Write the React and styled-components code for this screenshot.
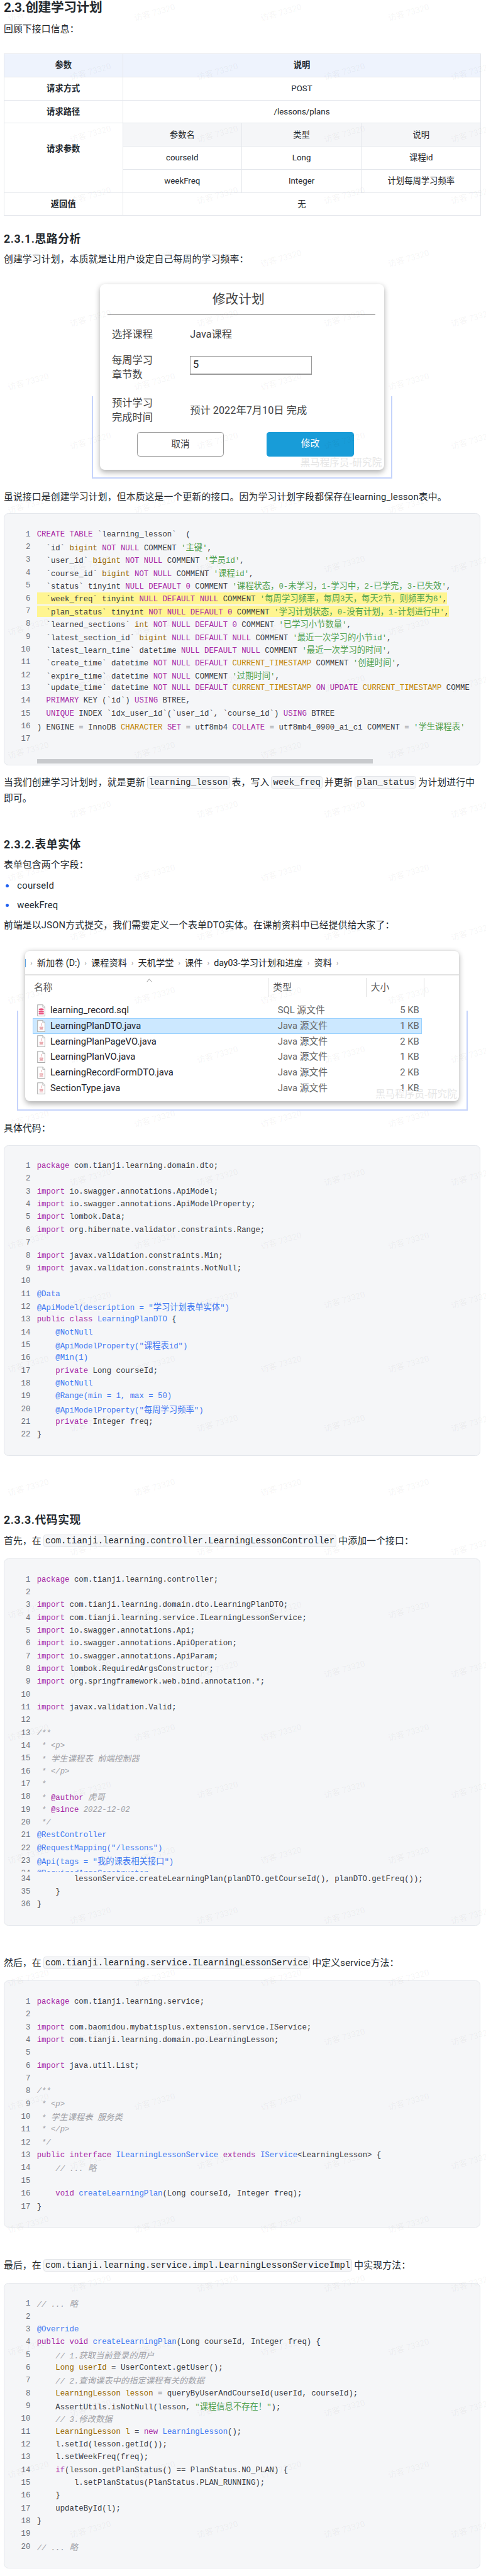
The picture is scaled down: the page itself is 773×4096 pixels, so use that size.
import React from 'react';
import styled, { createGlobalStyle } from 'styled-components';

const GlobalStyle = createGlobalStyle`
  html, body { margin: 0; padding: 0; background: #fff; }
  * { box-sizing: border-box; }
`;

const SANS = `Roboto, "Noto Sans CJK SC", sans-serif`;
const MONO = `"Liberation Mono", "Noto Sans CJK SC", monospace`;

// sizes are read off the 1044px wide reference, drawn at 0.74
const px = n => `${n * 0.74}px`;

const Page = styled.div`
  position: relative;
  width: ${px(1044)};
  padding: 0 ${px(11)} ${px(13)} ${px(8)};
  overflow: hidden;
  font-family: ${SANS};
  font-size: ${px(20)};
  line-height: ${px(34)};
  letter-spacing: ${px(0.25)};
  color: #24292e;
`;

const H2 = styled.h2`
  margin: 0;
  font-size: ${px(28)};
  font-weight: 700;
  line-height: ${px(34)};
  letter-spacing: ${px(-0.5)};
`;

const H3 = styled.h3`
  margin: ${p => px(p.$top)} 0 0;
  font-size: ${px(24)};
  font-weight: 700;
  line-height: ${px(34)};
  letter-spacing: ${px(0.8)};
`;

const P = styled.p`
  margin: ${p => px(p.$top)} 0 0;
`;

const Inline = styled.code`
  display: inline-block;
  height: ${px(27)};
  margin: 0 ${px(4)};
  padding: 0 ${px(3)};
  border: 1px solid #e3e5e9;
  border-radius: ${px(5)};
  background: #f5f6f8;
  font-family: ${MONO};
  font-size: ${px(18.85)};
  line-height: ${px(25)};
  letter-spacing: 0;
  vertical-align: 1px;
  color: #24292e;
`;

const List = styled.ul`
  margin: ${px(10)} 0 0;
  padding: 0;
  list-style: none;
`;

const Item = styled.li`
  display: flex;
  align-items: center;
  & + & { margin-top: ${px(8)}; }
  &::before {
    content: '';
    width: ${px(7)};
    height: ${px(7)};
    margin: 0 ${px(18)} 0 ${px(4)};
    border-radius: 50%;
    background: #1f5ff0;
  }
`;

/* params table */
const Table = styled.table`
  width: ${px(1025)};
  margin-top: ${px(35)};
  border-collapse: collapse;
  table-layout: fixed;
  font-size: ${px(18)};
  letter-spacing: 0;
  text-align: center;
  th, td { border: 1px solid #e4e7ec; padding: 0; height: ${px(49.7)}; }
  th { font-weight: 700; }
`;

const HeadRow = styled.tr`
  th { background: #eef3fd; }
`;

const SubHead = styled.td`
  background: #f5f6f8;
`;

const TopCell = styled.th`
  vertical-align: top;
  padding-top: ${px(38)} !important;
`;

/* screenshots */
const Figure = styled.figure`
  position: relative;
  width: ${p => px(p.$width)};
  margin: ${p => px(p.$top)} auto 0;
  padding: ${px(20)} ${p => px(p.$side)};
  letter-spacing: 0;
  &::before {
    content: '';
    position: absolute;
    left: 0;
    right: 0;
    bottom: 0;
    height: ${p => px(p.$frame)};
    border: 2px solid #c5d3fb;
    border-top: 0;
  }
`;

const ShotCard = styled.div`
  position: relative;
  background: #fff;
  border-radius: ${px(10)};
  box-shadow: 0 ${px(5)} ${px(12)} rgba(0, 0, 0, 0.32);
`;

const Stamp = styled.span`
  position: absolute;
  right: ${px(5)};
  bottom: 0;
  font-family: "Liberation Serif", "Noto Sans CJK SC", serif;
  font-size: ${px(21)};
  line-height: ${px(28)};
  color: #e6e6e6;
`;

const PlanCard = styled(ShotCard)`
  height: ${px(398)};
  padding: 0 ${px(19)} 0 ${px(15)};
  font-size: ${px(22)};
  color: #444;
`;

const PlanTitle = styled.div`
  height: ${px(66)};
  border-bottom: 2px solid #b4b4b4;
  padding-right: ${px(12)};
  text-align: center;
  font-size: ${px(28)};
  line-height: ${px(66)};
`;

const FormRow = styled.div`
  display: grid;
  grid-template-columns: ${px(168)} 1fr;
  align-items: ${p => p.$align || 'center'};
  margin-top: ${p => px(p.$top)};
  padding-left: ${px(10)};
  line-height: ${px(30)};
`;

const Field = styled.div`
  width: ${px(262)};
  height: ${px(40)};
  margin-top: ${px(5)};
  padding-left: ${px(5)};
  border: 1px solid #999;
  border-bottom-width: 2px;
  line-height: ${px(36)};
  color: #222;
`;

const PlanActions = styled.div`
  display: flex;
  margin-top: ${px(17)};
  padding-left: ${px(64)};
  gap: ${px(92)};
`;

const PlanButton = styled.div`
  width: ${px(187)};
  height: ${px(52)};
  border-radius: ${px(6)};
  border: ${p => (p.$primary ? '0' : '1px solid #999')};
  background: ${p => (p.$primary ? '#189cd8' : '#fff')};
  color: ${p => (p.$primary ? '#fff' : '#444')};
  text-align: center;
  font-size: ${px(20)};
  line-height: ${px(50)};
`;

const ExplorerCard = styled(ShotCard)`
  height: ${px(324)};
  padding-top: ${px(2)};
  border-top: 1px solid #e6e6e6;
`;

const Crumbs = styled.div`
  display: flex;
  align-items: center;
  height: ${px(50)};
  border-bottom: 2px solid #e2e2e2;
  font-size: ${px(19.2)};
  color: #222;
  white-space: nowrap;
`;

const CrumbEdge = styled.span`
  width: 1px;
  height: ${px(18)};
  background: #5aa0e0;
`;

const CrumbSep = styled.span`
  width: ${px(24)};
  text-align: center;
  font-size: ${px(15)};
  color: #999;
`;

const ExplorerHead = styled.div`
  position: relative;
  display: flex;
  height: ${px(40)};
  margin: ${px(6)} 0 0 ${px(16)};
  color: #555;
  font-size: ${px(20)};
`;

const HeadCell = styled.div`
  width: ${p => px(p.$w)};
  padding: ${px(4)} 0 0 ${p => px(p.$pad)};
  border-right: 1px solid #ddd;
`;

const SortCaret = styled.svg`
  position: absolute;
  left: ${px(245)};
  top: ${px(1)};
  width: ${px(12)};
  height: ${px(8)};
`;

const FileList = styled.div`
  margin: ${px(12)} 0 0 ${px(16)};
  width: ${px(837)};
`;

const FileRow = styled.div`
  display: grid;
  grid-template-columns: ${px(517)} 1fr auto;
  align-items: center;
  height: ${px(33.7)};
  padding: 0 ${px(6)} 0 ${px(10)};
  font-size: ${px(20)};
  color: #666;
  background: ${p => (p.$selected ? '#cce8ff' : 'transparent')};
  box-shadow: ${p => (p.$selected ? 'inset 0 0 0 1px #99d1ff' : 'none')};
`;

const FileName = styled.span`
  display: flex;
  align-items: center;
  gap: ${px(10)};
  color: #1c1c2a;
`;

const FileSvg = styled.svg`
  width: ${px(18)};
  height: ${px(26)};
  flex: none;
`;

/* code blocks */
const CodeBlock = styled.div`
  position: relative;
  margin-top: ${p => px(p.$top)};
  padding: ${px(30.5)} ${px(25)} ${p => px(p.$scroll ? 1.8 : 30.5)} 0;
  border: 1px solid #e4e7ec;
  border-radius: ${px(10)};
  background: #f5f6f8;
  font-family: ${MONO};
  font-size: ${px(16.67)};
  line-height: ${px(27.5)};
  letter-spacing: 0;
  color: #383a42;
  overflow: hidden;
`;

const CodeRow = styled.div`
  display: flex;
  height: ${px(27.5)};
  white-space: pre;
`;

const LineNo = styled.span`
  flex: none;
  width: ${px(56)};
  margin-right: ${px(14)};
  text-align: right;
  color: #6b7078;
`;

const LineText = styled.span`
  flex: 1;
  min-width: 0;
`;

const Mark = styled.span`
  display: inline-block;
  height: ${px(25)};
  line-height: ${px(25)};
  margin-top: ${px(1)};
  background: #fff591;
  vertical-align: top;
`;

const Clip = styled.div`
  height: ${px(641)};
  margin-bottom: ${px(2.25)};
  overflow: hidden;
`;

const FakeScroll = styled.div`
  width: ${px(722)};
  height: ${px(10)};
  margin: ${px(29)} 0 0 ${px(70)};
  background: #c8cacd;
`;

const Tok = styled.span`
  color: ${p => p.$color};
  font-style: ${p => (p.$italic ? 'italic' : 'normal')};
`;

const Cjk = styled.span`
  font-family: "Noto Sans CJK SC", sans-serif;
  font-size: ${px(18)};
`;

const Watermark = styled.span.attrs(p => ({ style: { left: px(p.$x), top: px(p.$y) } }))`
  position: absolute;
  transform: translate(-50%, -50%) rotate(-16deg);
  font-size: ${px(18)};
  line-height: ${px(20)};
  letter-spacing: 0;
  white-space: nowrap;
  color: rgba(0, 0, 0, 0.055);
  pointer-events: none;
`;

const COLORS = {
  k: '#a626a4',
  s: '#50a14f',
  t: '#986801',
  g: '#c18401',
  a: '#4078f2',
  c: '#a0a1a7',
};

// splits CJK runs out, they are wider than the latin cells
const withCjk = text =>
  text.split(/([\u3000-\u9fff\uff00-\uffef]+)/).map((part, i) =>
    i % 2 ? <Cjk key={i}>{part}</Cjk> : part
  );

// «k:text» marks a coloured token
const renderLine = line =>
  line.split(/(«[^»]+»)/).map((part, i) => {
    if (part[0] !== '«') return <React.Fragment key={i}>{withCjk(part)}</React.Fragment>;
    const kind = part[1];
    return (
      <Tok key={i} $color={COLORS[kind]} $italic={kind === 'c'}>
        {withCjk(part.slice(3, -1))}
      </Tok>
    );
  });

const Lines = ({ lines, start = 1, marked = [] }) =>
  lines.map((line, i) => {
    const no = start + i;
    return (
      <CodeRow key={no}>
        <LineNo>{no}</LineNo>
        <LineText>
          {marked.includes(no) ? <Mark>{renderLine(line)}</Mark> : renderLine(line)}
        </LineText>
      </CodeRow>
    );
  });

const SQL = [
  '«k:CREATE TABLE» `learning_lesson`  (',
  '  `id` «t:bigint» «k:NOT NULL» COMMENT «s:\'主键\'»,',
  '  `user_id` «t:bigint» «k:NOT NULL» COMMENT «s:\'学员id\'»,',
  '  `course_id` «t:bigint» «k:NOT NULL» COMMENT «s:\'课程id\'»,',
  '  `status` tinyint «k:NULL DEFAULT 0» COMMENT «s:\'课程状态，0-未学习，1-学习中，2-已学完，3-已失效\'»,',
  '  `week_freq` tinyint «k:NULL DEFAULT NULL» COMMENT «s:\'每周学习频率，每周3天，每天2节，则频率为6\'»,',
  '  `plan_status` tinyint «k:NOT NULL DEFAULT 0» COMMENT «s:\'学习计划状态，0-没有计划，1-计划进行中\'»,',
  '  `learned_sections` «t:int» «k:NOT NULL DEFAULT 0» COMMENT «s:\'已学习小节数量\'»,',
  '  `latest_section_id` «t:bigint» «k:NULL DEFAULT NULL» COMMENT «s:\'最近一次学习的小节id\'»,',
  '  `latest_learn_time` datetime «k:NULL DEFAULT NULL» COMMENT «s:\'最近一次学习的时间\'»,',
  '  `create_time` datetime «k:NOT NULL DEFAULT» «g:CURRENT_TIMESTAMP» COMMENT «s:\'创建时间\'»,',
  '  `expire_time` datetime «k:NOT NULL» COMMENT «s:\'过期时间\'»,',
  '  `update_time` datetime «k:NOT NULL DEFAULT» «g:CURRENT_TIMESTAMP» «k:ON UPDATE» «g:CURRENT_TIMESTAMP» COMME',
  '  «k:PRIMARY» KEY (`id`) «k:USING» BTREE,',
  '  «k:UNIQUE» INDEX `idx_user_id`(`user_id`, `course_id`) «k:USING» BTREE',
  ') ENGINE = InnoDB «g:CHARACTER» «k:SET» = utf8mb4 «k:COLLATE» = utf8mb4_0900_ai_ci COMMENT = «s:\'学生课程表\'»',
  '',
];

const DTO = [
  '«k:package» com.tianji.learning.domain.dto;',
  '',
  '«k:import» io.swagger.annotations.ApiModel;',
  '«k:import» io.swagger.annotations.ApiModelProperty;',
  '«k:import» lombok.Data;',
  '«k:import» org.hibernate.validator.constraints.Range;',
  '',
  '«k:import» javax.validation.constraints.Min;',
  '«k:import» javax.validation.constraints.NotNull;',
  '',
  '«a:@Data»',
  '«a:@ApiModel(description = "学习计划表单实体")»',
  '«k:public class» «a:LearningPlanDTO» {',
  '    «a:@NotNull»',
  '    «a:@ApiModelProperty("课程表id")»',
  '    «a:@Min(1)»',
  '    «k:private» Long courseId;',
  '    «a:@NotNull»',
  '    «a:@Range(min = 1, max = 50)»',
  '    «a:@ApiModelProperty("每周学习频率")»',
  '    «k:private» Integer freq;',
  '}',
];

const CONTROLLER = [
  '«k:package» com.tianji.learning.controller;',
  '',
  '«k:import» com.tianji.learning.domain.dto.LearningPlanDTO;',
  '«k:import» com.tianji.learning.service.ILearningLessonService;',
  '«k:import» io.swagger.annotations.Api;',
  '«k:import» io.swagger.annotations.ApiOperation;',
  '«k:import» io.swagger.annotations.ApiParam;',
  '«k:import» lombok.RequiredArgsConstructor;',
  '«k:import» org.springframework.web.bind.annotation.*;',
  '',
  '«k:import» javax.validation.Valid;',
  '',
  '«c:/**»',
  '«c: * <p>»',
  '«c: * 学生课程表 前端控制器»',
  '«c: * </p>»',
  '«c: *»',
  '«c: * »«k:@author» «c:虎哥»',
  '«c: * »«k:@since» «c:2022-12-02»',
  '«c: */»',
  '«a:@RestController»',
  '«a:@RequestMapping("/lessons")»',
  '«a:@Api(tags = "我的课表相关接口")»',
  '«a:@RequiredArgsConstructor»',
];

const CONTROLLER_END = [
  '        lessonService.createLearningPlan(planDTO.getCourseId(), planDTO.getFreq());',
  '    }',
  '}',
];

const SERVICE = [
  '«k:package» com.tianji.learning.service;',
  '',
  '«k:import» com.baomidou.mybatisplus.extension.service.IService;',
  '«k:import» com.tianji.learning.domain.po.LearningLesson;',
  '',
  '«k:import» java.util.List;',
  '',
  '«c:/**»',
  '«c: * <p>»',
  '«c: * 学生课程表 服务类»',
  '«c: * </p>»',
  '«c: */»',
  '«k:public» «k:interface» «a:ILearningLessonService» «k:extends» «a:IService»<LearningLesson> {',
  '    «c:// ... 略»',
  '',
  '    «k:void» «a:createLearningPlan»(Long courseId, Integer freq);',
  '}',
];

const IMPL = [
  '«c:// ... 略»',
  '',
  '«a:@Override»',
  '«k:public» «k:void» «a:createLearningPlan»(Long courseId, Integer freq) {',
  '    «c:// 1.获取当前登录的用户»',
  '    «t:Long» «t:userId» = UserContext.getUser();',
  '    «c:// 2.查询课表中的指定课程有关的数据»',
  '    «t:LearningLesson» «t:lesson» = queryByUserAndCourseId(userId, courseId);',
  '    AssertUtils.isNotNull(lesson, «s:"课程信息不存在！"»);',
  '    «c:// 3.修改数据»',
  '    «t:LearningLesson» «t:l» = «k:new» «a:LearningLesson»();',
  '    l.setId(lesson.getId());',
  '    l.setWeekFreq(freq);',
  '    «k:if»(lesson.getPlanStatus() == PlanStatus.NO_PLAN) {',
  '        l.setPlanStatus(PlanStatus.PLAN_RUNNING);',
  '    }',
  '    updateById(l);',
  '}',
  '',
  '«c:// ... 略»',
];

const FILES = [
  { name: 'learning_record.sql', type: 'SQL 源文件', size: '5 KB', sql: true },
  { name: 'LearningPlanDTO.java', type: 'Java 源文件', size: '1 KB', selected: true },
  { name: 'LearningPlanPageVO.java', type: 'Java 源文件', size: '2 KB' },
  { name: 'LearningPlanVO.java', type: 'Java 源文件', size: '1 KB' },
  { name: 'LearningRecordFormDTO.java', type: 'Java 源文件', size: '2 KB' },
  { name: 'SectionType.java', type: 'Java 源文件', size: '1 KB' },
];

const CRUMBS = ['新加卷 (D:)', '课程资料', '天机学堂', '课件', 'day03-学习计划和进度', '资料'];

const FileIcon = ({ sql }) => (
  <FileSvg viewBox="0 0 18 26" aria-hidden="true">
    <path d="M1 1h11l5 5v19H1z" fill="#fff" stroke="#a9a9a9" strokeWidth="1.4" />
    <path d="M12 1v5h5" fill="#eee" stroke="#a9a9a9" strokeWidth="1" />
    {sql ? (
      <g fill="#e8537f">
        <ellipse cx="9" cy="10.5" rx="5.5" ry="2.2" />
        <rect x="3.5" y="13.4" width="11" height="3.6" rx="1.6" />
        <rect x="3.5" y="18" width="11" height="3.6" rx="1.6" />
      </g>
    ) : (
      <g fill="none" stroke="#e59aa0" strokeWidth="1.3">
        <path d="M10 7c-2 2 1 3-.5 5" />
        <path d="M5.5 15h7l-1 3.5h-5z" fill="#f3c5c8" />
        <path d="M5 20.5h8" />
      </g>
    )}
  </FileSvg>
);

const A_ROWS = [29, 557, 821, 1086, 1349, 1613, 1877, 2140, 2406, 2668, 2933, 3197, 3461, 3724, 3988, 4252, 4517, 4781, 5045, 5308];
const B_ROWS = [156, 289, 421, 685, 949, 1213, 1470, 1740, 2004, 2268, 2531, 2795, 3060, 3326, 3588, 3847, 4117, 4379, 4644, 4908, 5175, 5436];
const A_COLS = [61, 333, 604, 878];
const B_COLS = [195, 468, 741, 1013];

const marks = [
  ...A_ROWS.flatMap(y => A_COLS.map(x => [x, y])),
  ...B_ROWS.flatMap(y => B_COLS.map(x => [x, y])),
];

export default function App() {
  return (
    <Page>
      <GlobalStyle />
      <H2>2.3.创建学习计划</H2>
      <P $top={12}>回顾下接口信息：</P>

      <Table>
        <colgroup>
          <col style={{ width: px(255) }} />
          <col style={{ width: px(256) }} />
          <col style={{ width: px(257) }} />
          <col style={{ width: px(257) }} />
        </colgroup>
        <tbody>
          <HeadRow>
            <th>参数</th>
            <th colSpan={3}>说明</th>
          </HeadRow>
          <tr>
            <th>请求方式</th>
            <td colSpan={3}>POST</td>
          </tr>
          <tr>
            <th>请求路径</th>
            <td colSpan={3}>/lessons/plans</td>
          </tr>
          <tr>
            <TopCell rowSpan={3}>请求参数</TopCell>
            <SubHead>参数名</SubHead>
            <SubHead>类型</SubHead>
            <SubHead>说明</SubHead>
          </tr>
          <tr>
            <td>courseId</td>
            <td>Long</td>
            <td>课程id</td>
          </tr>
          <tr>
            <td>weekFreq</td>
            <td>Integer</td>
            <td>计划每周学习频率</td>
          </tr>
          <tr>
            <th>返回值</th>
            <td colSpan={3}>无</td>
          </tr>
        </tbody>
      </Table>

      <H3 $top={33}>2.3.1.思路分析</H3>
      <P $top={10}>创建学习计划，本质就是让用户设定自己每周的学习频率：</P>

      <Figure $width={646} $side={18} $top={16} $frame={175}>
        <PlanCard>
          <PlanTitle>修改计划</PlanTitle>
          <FormRow $top={27}>
            <span>选择课程</span>
            <span>Java课程</span>
          </FormRow>
          <FormRow $top={26} $align="start">
            <span>每周学习<br />章节数</span>
            <Field>5</Field>
          </FormRow>
          <FormRow $top={32}>
            <span>预计学习<br />完成时间</span>
            <span>预计 2022年7月10日 完成</span>
          </FormRow>
          <PlanActions>
            <PlanButton>取消</PlanButton>
            <PlanButton $primary>修改</PlanButton>
          </PlanActions>
          <Stamp>黑马程序员-研究院</Stamp>
        </PlanCard>
      </Figure>

      <P $top={22}>虽说接口是创建学习计划，但本质这是一个更新的接口。因为学习计划字段都保存在learning_lesson表中。</P>

      <CodeBlock $top={18} $scroll>
        <Lines lines={SQL} marked={[6, 7]} />
        <FakeScroll />
      </CodeBlock>

      <P $top={20}>
        当我们创建学习计划时，就是更新<Inline>learning_lesson</Inline>表，写入<Inline>week_freq</Inline>并更新<Inline>plan_status</Inline>为计划进行中<br />即可。
      </P>

      <H3 $top={67}>2.3.2.表单实体</H3>
      <P $top={9}>表单包含两个字段：</P>
      <List>
        <Item>courseId</Item>
        <Item>weekFreq</Item>
      </List>
      <P $top={9}>前端是以JSON方式提交，我们需要定义一个表单DTO实体。在课前资料中已经提供给大家了：</P>

      <Figure $width={969} $side={18} $top={17} $frame={212}>
        <ExplorerCard>
          <Crumbs>
            <CrumbEdge />
            <CrumbSep>›</CrumbSep>
            {CRUMBS.map(crumb => (
              <React.Fragment key={crumb}>
                {crumb}
                <CrumbSep>›</CrumbSep>
              </React.Fragment>
            ))}
          </Crumbs>
          <ExplorerHead>
            <HeadCell $w={507} $pad={3}>名称</HeadCell>
            <HeadCell $w={211} $pad={10}>类型</HeadCell>
            <HeadCell $w={124} $pad={9}>大小</HeadCell>
            <SortCaret viewBox="0 0 12 8">
              <path d="M1 7l5-6 5 6" fill="none" stroke="#888" strokeWidth="1.2" />
            </SortCaret>
          </ExplorerHead>
          <FileList>
            {FILES.map(file => (
              <FileRow key={file.name} $selected={file.selected}>
                <FileName>
                  <FileIcon sql={file.sql} />
                  {file.name}
                </FileName>
                <span>{file.type}</span>
                <span>{file.size}</span>
              </FileRow>
            ))}
          </FileList>
          <Stamp>黑马程序员-研究院</Stamp>
        </ExplorerCard>
      </Figure>

      <P $top={22}>具体代码：</P>
      <CodeBlock $top={18}>
        <Lines lines={DTO} />
      </CodeBlock>

      <H3 $top={122}>2.3.3.代码实现</H3>
      <P $top={10}>
        首先，在<Inline>com.tianji.learning.controller.LearningLessonController</Inline>中添加一个接口：
      </P>
      <CodeBlock $top={20}>
        <Clip>
          <Lines lines={CONTROLLER} />
        </Clip>
        <Lines lines={CONTROLLER_END} start={34} />
      </CodeBlock>

      <P $top={64}>
        然后，在<Inline>com.tianji.learning.service.ILearningLessonService</Inline>中定义service方法：
      </P>
      <CodeBlock $top={20}>
        <Lines lines={SERVICE} />
      </CodeBlock>

      <P $top={64}>
        最后，在<Inline>com.tianji.learning.service.impl.LearningLessonServiceImpl</Inline>中实现方法：
      </P>
      <CodeBlock $top={20}>
        <Lines lines={IMPL} />
      </CodeBlock>

      {marks.map(([x, y]) => (
        <Watermark key={`${x}-${y}`} $x={x} $y={y}>访客 73320</Watermark>
      ))}
    </Page>
  );
}
